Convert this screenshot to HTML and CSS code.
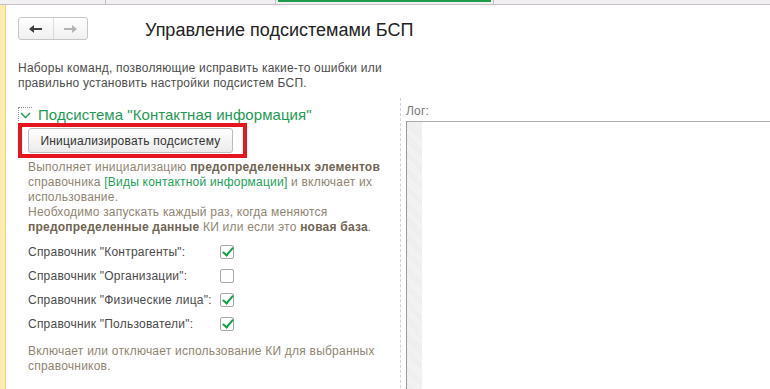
FILE: index.html
```html
<!DOCTYPE html>
<html lang="ru">
<head>
    <meta charset="UTF-8">
    <title>Управление подсистемами БСП</title>
    <link rel="stylesheet" href="styles.css">
</head>
<body>
    <div class="topbar">
        <div class="tab tab-first"></div>
        <div class="tab tab-second"></div>
        <div class="tab tab-active"><span class="tab-mark"></span></div>
        <div class="tab tab-rest"></div>
    </div>

    <div class="main">
        <div class="sidebar"></div>

        <div class="content">
            <div class="header">
                <div class="nav">
                    <button class="nav-btn">
                        <svg width="13" height="8" viewBox="0 0 13 8"><path d="M0 4 L5 0 V3 H13 V5 H5 V8 Z" fill="#3f3f3f"/></svg>
                    </button>
                    <button class="nav-btn">
                        <svg width="13" height="8" viewBox="0 0 13 8"><path d="M13 4 L8 0 V3 H0 V5 H8 V8 Z" fill="#b4b4b4"/></svg>
                    </button>
                </div>
                <h1 class="title">Управление подсистемами БСП</h1>
            </div>

            <p class="description">
                Наборы команд, позволяющие исправить какие-то ошибки или<br>
                правильно установить настройки подсистем БСП.
            </p>

            <div class="columns">
                <div class="left">
                    <div class="group-title">
                        <span class="collapse">
                            <svg width="11" height="7" viewBox="0 0 11 7"><path d="M1 1 L5.5 5.5 L10 1" fill="none" stroke="#1f9a52" stroke-width="1.4"/></svg>
                        </span>
                        Подсистема "Контактная информация"
                    </div>

                    <div class="group-body">
                        <div class="highlight">
                            <button class="command">Инициализировать подсистему</button>
                        </div>

                        <p class="hint">
                            Выполняет инициализацию <b>предопределенных элементов</b><br>
                            справочника <span class="link">[Виды контактной информации]</span> и включает их<br>
                            использование.<br>
                            Необходимо запускать каждый раз, когда меняются<br>
                            <b>предопределенные данные</b> КИ или если это <b>новая база</b>.
                        </p>

                        <div class="checks">
                            <label class="check-row">
                                <span class="check-label">Справочник "Контрагенты":</span>
                                <span class="checkbox checked"></span>
                            </label>
                            <label class="check-row">
                                <span class="check-label">Справочник "Организации":</span>
                                <span class="checkbox"></span>
                            </label>
                            <label class="check-row">
                                <span class="check-label">Справочник "Физические лица":</span>
                                <span class="checkbox checked"></span>
                            </label>
                            <label class="check-row">
                                <span class="check-label">Справочник "Пользователи":</span>
                                <span class="checkbox checked"></span>
                            </label>
                        </div>

                        <p class="hint hint-bottom">
                            Включает или отключает использование КИ для выбранных<br>
                            справочников.
                        </p>
                    </div>
                </div>

                <div class="right">
                    <div class="log-label">Лог:</div>
                    <div class="log-field">
                        <div class="log-gutter"></div>
                        <div class="log-text"></div>
                    </div>
                </div>
            </div>
        </div>
    </div>
</body>
</html>
```

FILE: styles.css
```css
html, body {
    margin: 0;
    padding: 0;
}

body {
    width: 770px;
    height: 389px;
    overflow: hidden;
    background-color: #fff;
    font-family: 'Liberation Sans', Arial, sans-serif;
    font-size: 12px;
    letter-spacing: 0.22px;
    color: #4d4d4d;
}

/* top strip with window tabs */
.topbar {
    display: flex;
    height: 4px;
    background-color: #f2f0f2;
    border-bottom: 1px solid #c4c0c4;
}

.tab {
    height: 4px;
    border-right: 1px solid #c4c0c4;
}

.tab-first {
    width: 105px;
}

.tab-second {
    width: 169px;
}

.tab-active {
    width: 218px;
    padding: 0 2px;
    box-sizing: border-box;
}

.tab-mark {
    display: block;
    height: 2px;
    background-color: #1f9a4a;
}

.tab-rest {
    flex: 1;
    border-right: none;
}

.main {
    display: flex;
    height: 384px;
}

.sidebar {
    width: 5px;
    background-color: #fcecad;
    border-right: 1px solid #ecd57e;
}

.content {
    flex: 1;
    padding: 11px 0 0 12px;
    min-width: 0;
}

/* form header */
.header {
    display: flex;
    align-items: center;
}

.nav {
    display: flex;
    width: 70px;
    height: 23px;
    border: 1px solid #c6c6c6;
    border-radius: 3px;
    background: linear-gradient(#ffffff, #f0f0f0);
    box-sizing: border-box;
    overflow: hidden;
}

.nav-btn {
    flex: 1;
    display: flex;
    align-items: center;
    justify-content: center;
    border: none;
    background: transparent;
    padding: 0;
}

.nav-btn + .nav-btn {
    border-left: 1px solid #dcdcdc;
}

.title {
    margin: 4px 0 0 57px;
    font-size: 18px;
    font-weight: normal;
    letter-spacing: 0;
    color: #222;
}

.description {
    margin: 20px 0 0 0;
    line-height: 15px;
    color: #4d4d4d;
}

/* two columns: commands and log */
.columns {
    display: flex;
    margin-top: 7px;
    height: 300px;
}

.left {
    width: 382px;
    flex-shrink: 0;
}

.group-title {
    display: flex;
    align-items: center;
    margin-top: 7px;
    height: 18px;
    font-size: 15px;
    letter-spacing: 0.05px;
    color: #1f9a52;
}

.collapse {
    display: flex;
    align-items: flex-end;
    justify-content: center;
    width: 14px;
    height: 14px;
    margin-right: 6px;
    padding-bottom: 2px;
    box-sizing: border-box;
    border-top: 1px dotted #8a8a8a;
    border-left: 1px dotted #8a8a8a;
}

.group-body {
    padding-left: 10px;
}

.highlight {
    width: fit-content;
    margin: 0 0 0 -10px;
    padding: 1px 10px 1px 6px;
    border: 4px solid #e5151f;
}

.command {
    display: block;
    width: 205px;
    height: 25px;
    border: 1px solid #bcbcbc;
    border-radius: 3px;
    background: linear-gradient(#ffffff, #ebebeb);
    font-family: inherit;
    font-size: 12px;
    letter-spacing: 0.22px;
    color: #333;
    padding: 0;
}

.hint {
    margin: 2px 0 0 0;
    line-height: 15px;
    color: #8f8572;
    white-space: nowrap;
}

.hint b {
    color: #6f6552;
}

.hint .link {
    color: #23a05a;
}

.checks {
    margin-top: 5px;
}

.check-row {
    display: flex;
    align-items: center;
    height: 24px;
}

.check-label {
    width: 192px;
    color: #4a4a4a;
}

.checkbox {
    position: relative;
    width: 14px;
    height: 14px;
    box-sizing: border-box;
    border: 1px solid #a8a8a8;
    border-radius: 2px;
    background-color: #fff;
}

.checkbox.checked::after {
    content: "";
    position: absolute;
    left: 4px;
    top: -1px;
    width: 4px;
    height: 9px;
    border-right: 2.5px solid #15a04a;
    border-bottom: 2.5px solid #15a04a;
    transform: rotate(40deg);
}

.hint-bottom {
    margin-top: 8px;
}

.right {
    flex: 1;
    min-width: 0;
    display: flex;
    flex-direction: column;
    border-left: 1px dashed #d4d4d4;
    padding-left: 5px;
    height: 300px;
}

.log-label {
    margin-top: 6px;
    line-height: 15px;
    color: #777;
}

.log-field {
    flex: 1;
    display: flex;
    margin-top: 2px;
    border-top: 1px solid #aaaaaa;
    border-left: 1px solid #9a9a9a;
    width: 400px;
}

.log-gutter {
    width: 15px;
    background-color: #f0f0f0;
    background-image: repeating-linear-gradient(45deg, #f4f4f4 0 1px, #ececec 1px 2px);
}

.log-text {
    flex: 1;
}
```
